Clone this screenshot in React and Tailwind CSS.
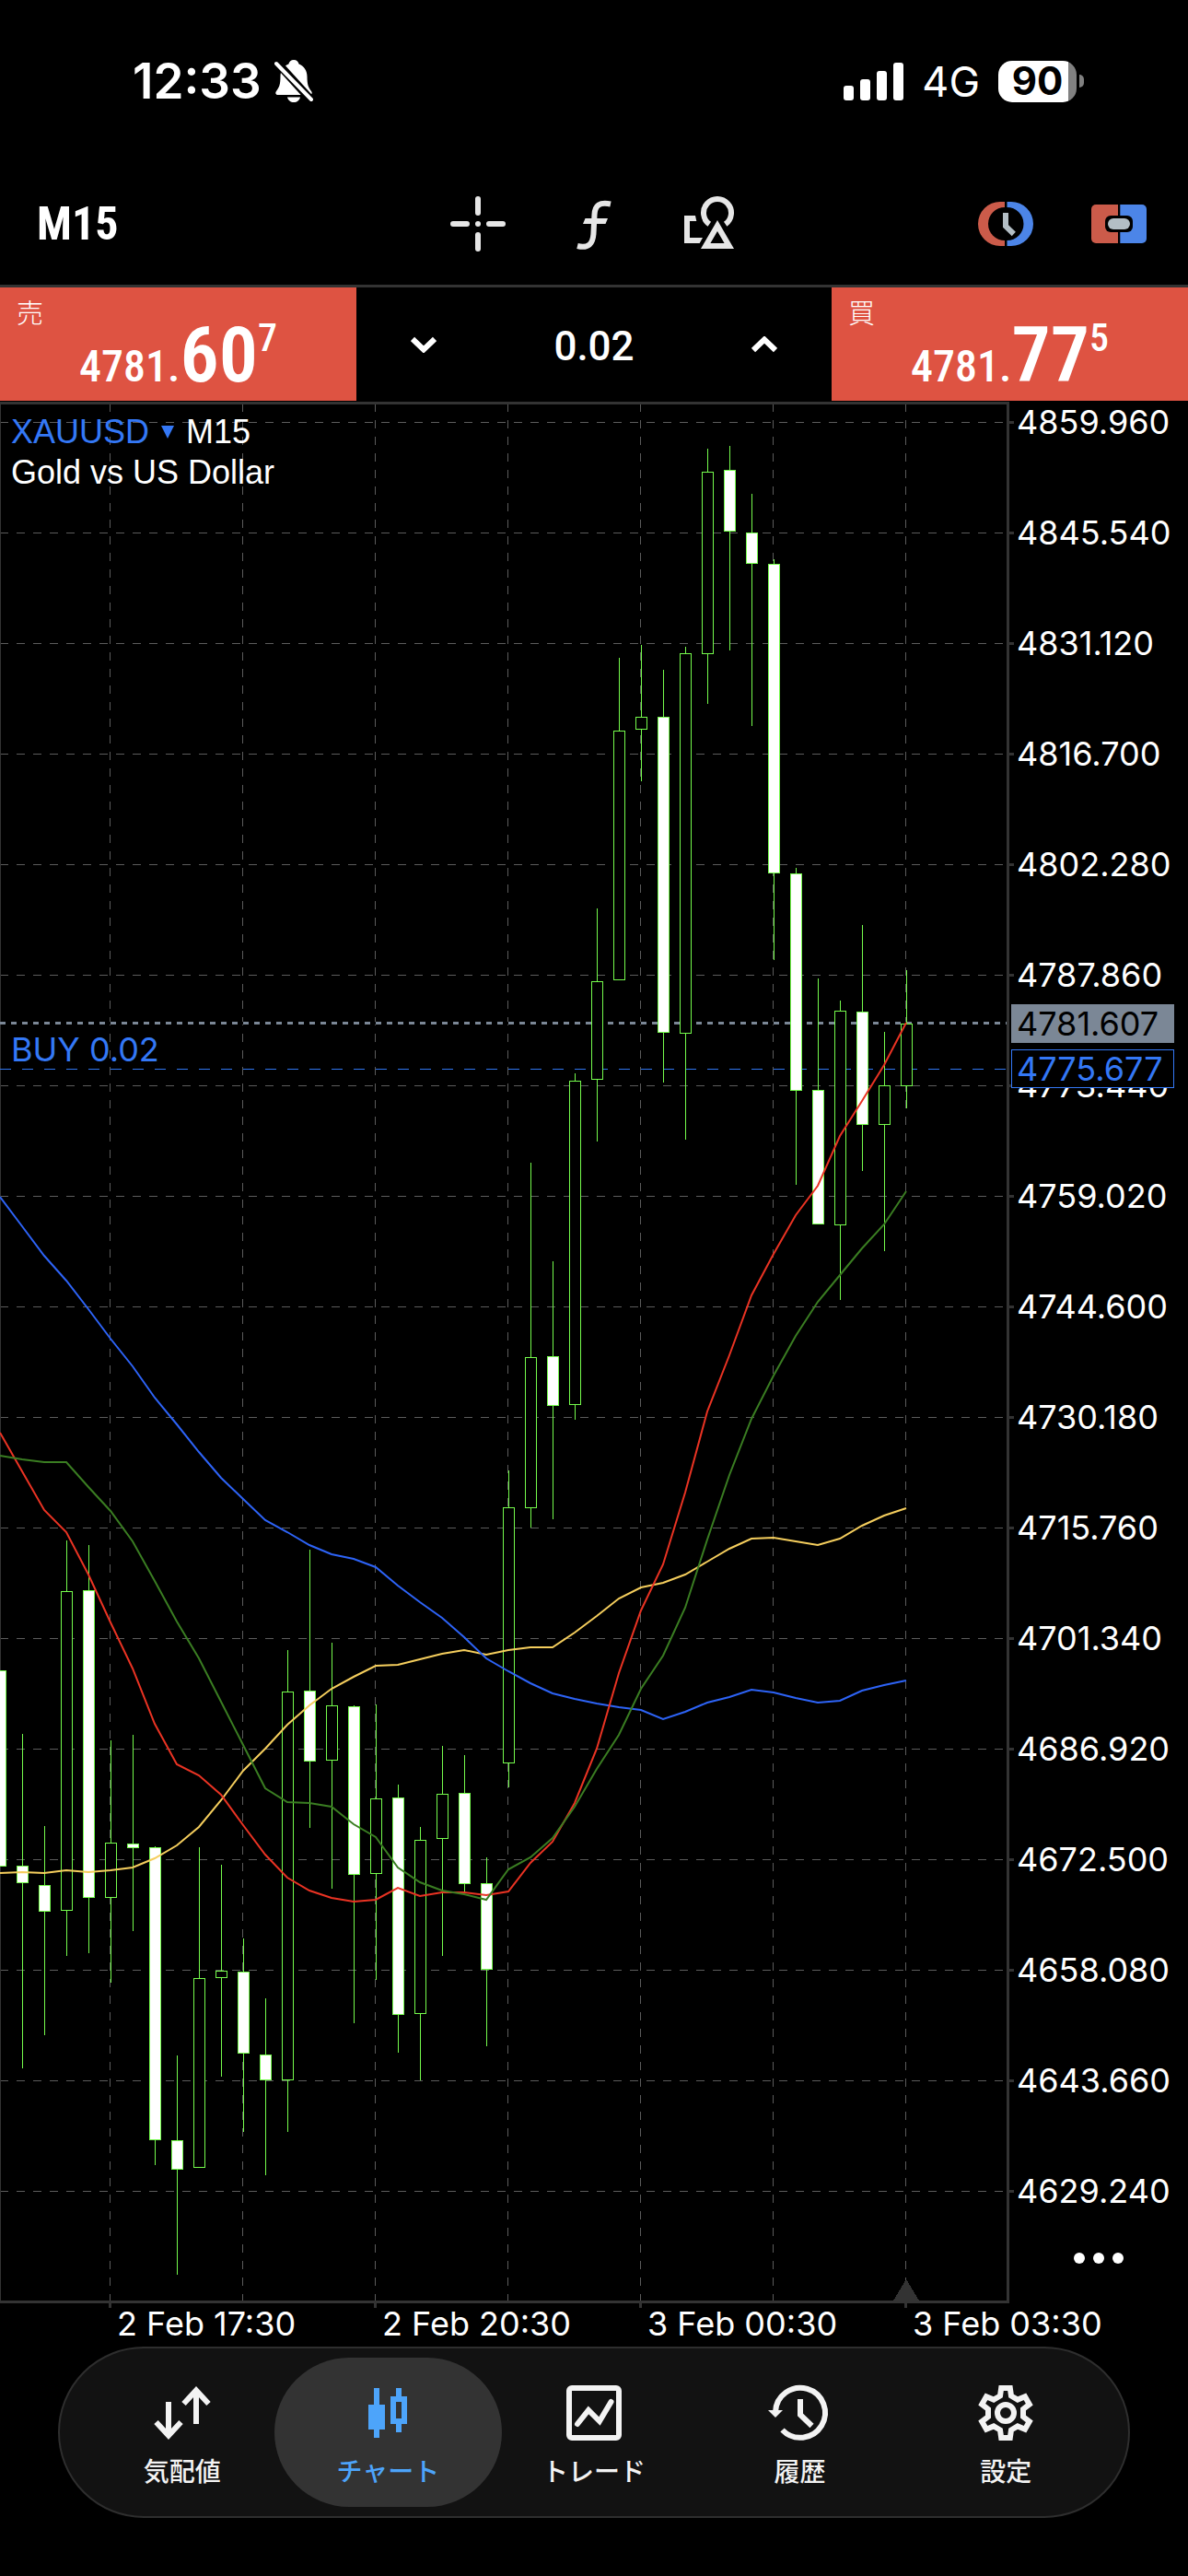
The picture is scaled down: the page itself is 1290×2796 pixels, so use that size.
import React, { useState } from 'react';

// [high, low, bodyTop, bodyBottom, 1 = bearish (filled)]
const candles = [
    [1813, 2026, 1813, 2026, 1],
    [1882, 2245, 2025, 2044, 1],
    [1982, 2209, 2046, 2075, 1],
    [1672, 2123, 1727, 2074, 0],
    [1677, 2120, 1726, 2060, 1],
    [1889, 2152, 2000, 2060, 0],
    [1883, 2096, 2001, 2006, 1],
    [2004, 2350, 2005, 2323, 1],
    [2231, 2469, 2323, 2355, 1],
    [2005, 2352, 2147, 2353, 0],
    [2024, 2254, 2139, 2147, 0],
    [2104, 2314, 2140, 2229, 1],
    [2169, 2361, 2230, 2258, 1],
    [1791, 2314, 1836, 2258, 0],
    [1682, 1984, 1835, 1912, 1],
    [1783, 2050, 1851, 1911, 0],
    [1851, 2196, 1852, 2035, 1],
    [1850, 2149, 1952, 2034, 0],
    [1937, 2228, 1951, 2187, 1],
    [1983, 2258, 1997, 2186, 0],
    [1895, 2123, 1947, 1996, 0],
    [1905, 2054, 1946, 2045, 1],
    [2016, 2221, 2044, 2138, 1],
    [1596, 1940, 1636, 1914, 0],
    [1262, 1658, 1473, 1637, 0],
    [1369, 1649, 1472, 1526, 1],
    [1165, 1541, 1173, 1525, 0],
    [986, 1239, 1065, 1172, 0],
    [714, 1064, 793, 1064, 0],
    [700, 848, 778, 792, 0],
    [727, 1175, 778, 1121, 1],
    [702, 1237, 709, 1122, 0],
    [487, 764, 512, 710, 0],
    [484, 706, 510, 577, 1],
    [536, 788, 578, 612, 1],
    [607, 1042, 612, 948, 1],
    [942, 1286, 948, 1184, 1],
    [1062, 1329, 1183, 1329, 1],
    [1086, 1411, 1097, 1330, 0],
    [1004, 1271, 1098, 1221, 1],
    [1120, 1358, 1178, 1221, 0],
    [1053, 1203, 1111, 1179, 0],
];

// Moving averages, one value per candle
const averages = [
    {
        color: '#f5ce5d',
        values: [2033, 2032, 2033, 2030, 2032, 2030, 2027, 2017, 2003, 1983, 1954, 1922, 1898, 1872, 1851, 1833, 1820, 1808, 1807, 1801, 1795, 1791, 1796, 1791, 1788, 1788, 1772, 1754, 1735, 1723, 1718, 1709, 1695, 1681, 1670, 1669, 1673, 1677, 1670, 1656, 1645, 1637],
    },
    {
        color: '#2d63f6',
        values: [1299, 1331, 1363, 1390, 1421, 1453, 1483, 1517, 1546, 1576, 1604, 1627, 1650, 1663, 1677, 1687, 1692, 1701, 1721, 1739, 1756, 1777, 1800, 1814, 1827, 1838, 1844, 1849, 1853, 1856, 1866, 1858, 1848, 1842, 1834, 1837, 1843, 1848, 1846, 1835, 1829, 1824],
    },
    {
        color: '#ea3323',
        values: [1555, 1597, 1639, 1663, 1709, 1761, 1811, 1871, 1915, 1927, 1948, 1981, 2013, 2038, 2052, 2060, 2064, 2062, 2049, 2058, 2054, 2054, 2057, 2053, 2022, 1999, 1957, 1898, 1816, 1748, 1698, 1620, 1532, 1471, 1406, 1361, 1319, 1287, 1233, 1195, 1156, 1110],
    },
    {
        color: '#3a7d22',
        values: [1580, 1584, 1587, 1587, 1614, 1640, 1673, 1716, 1760, 1800, 1847, 1894, 1941, 1956, 1957, 1961, 1980, 1994, 2027, 2043, 2052, 2056, 2062, 2029, 2016, 1995, 1961, 1920, 1883, 1833, 1797, 1745, 1671, 1601, 1540, 1493, 1450, 1413, 1384, 1355, 1329, 1293],
    },
];

const prices = Array.from({ length: 17 }, (_, i) => ({
    y: 458 + i * 120,
    label: (4859.96 - i * 14.42).toFixed(3),
}));

const columns = [119, 263, 407, 551, 695, 839, 983];

const dates = [
    { x: 119, label: '2 Feb 17:30' },
    { x: 407, label: '2 Feb 20:30' },
    { x: 695, label: '3 Feb 00:30' },
    { x: 983, label: '3 Feb 03:30' },
];

function BellOffIcon() {
    return (
        <svg viewBox="0 0 42 46" className="w-[42px] h-[46px]" aria-hidden="true">
            <path d="M21 0c-3 0-5 2-5.600 4.500C9.500 7 6.500 12 6.500 18c0 9-1.500 12-4.500 16-1.500 2-.5 4 2 4h34c2.500 0 3.500-2 2-4-3-4-4.500-7-4.500-16 0-6-3-11-8.900-13.500C26 2 24 0 21 0z" fill="#fff" />
            <path d="M14 40.500h14c-.8 3.500-3.500 5.500-7 5.500s-6.200-2-7-5.500z" fill="#fff" />
            <path d="M1 1L42 46" stroke="#000" strokeWidth="9" />
            <path d="M2 4L40 43" stroke="#fff" strokeWidth="4" strokeLinecap="round" />
        </svg>
    );
}

function SignalIcon() {
    return (
        <svg viewBox="0 0 65 41" className="w-[65px] h-[41px]" fill="#fff" aria-hidden="true">
            <rect x="0" y="25" width="11" height="16" rx="3" />
            <rect x="18" y="18" width="11" height="23" rx="3" />
            <rect x="36" y="9" width="11" height="32" rx="3" />
            <rect x="54" y="0" width="11" height="41" rx="3" />
        </svg>
    );
}

function StatusBar() {
    return (
        <div className="flex h-44 items-center justify-between pl-[144px] pr-[113px]">
            <div className="flex items-center gap-[14px]">
                <span className="text-[53px] leading-none font-semibold">12:33</span>
                <BellOffIcon />
            </div>
            <div className="flex items-center gap-5">
                <SignalIcon />
                <span className="text-[45px] leading-none">4G</span>
                <div className="flex items-center gap-[3px]">
                    <div className="flex h-[45px] w-[85px] items-center justify-center rounded-[15px] bg-linear-to-r from-white from-90% to-[#808080] to-90%">
                        <span className="text-[42px] leading-none font-bold text-black">90</span>
                    </div>
                    <div className="h-[14px] w-[5px] rounded-r-full bg-[#808080]" />
                </div>
            </div>
        </div>
    );
}

function Toolbar() {
    return (
        <div className="grid h-[133px] grid-cols-3 items-center px-10">
            <button type="button" className="justify-self-start font-['Roboto_Condensed',Roboto,sans-serif] text-[50px] leading-none font-bold">M15</button>

            <div className="flex justify-center gap-[66px]">
                <button type="button" aria-label="Crosshair">
                    <svg viewBox="0 0 60 60" className="size-[60px]" stroke="#e6e6e6" strokeWidth="6" strokeLinecap="round">
                        <path d="M30 3v15M30 42v15M3 30h15M42 30h15M30 30h.01" />
                    </svg>
                </button>
                <button type="button" aria-label="Indicators">
                    <svg viewBox="0 0 60 60" className="size-[60px]">
                        <path d="M48 8.500C36 6 31 10 30.500 20L29.500 40C29 51.500 24 57 12 54" fill="none" stroke="#e6e6e6" strokeWidth="6" />
                        <path d="M20.500 24H45l-2.500 6H18z" fill="#e6e6e6" />
                    </svg>
                </button>
                <button type="button" aria-label="Objects">
                    <svg viewBox="0 0 60 60" className="size-[60px]">
                        <path d="M2 21h12l1.300 6H8v18h14l-3.300 6H2z" fill="#e6e6e6" />
                        <path d="M29.300 30.300A15 15 0 1 1 46.700 30.300" fill="none" stroke="#e6e6e6" strokeWidth="6" />
                        <path d="M38 32L25.200 54h25.600z" fill="none" stroke="#e6e6e6" strokeWidth="6" />
                    </svg>
                </button>
            </div>

            <div className="flex justify-end gap-[63px] pr-[5px]">
                <button type="button" aria-label="Pending order">
                    <svg viewBox="0 0 60 48" className="h-12 w-[60px]">
                        <path d="M29 0H24A24 24 0 0 0 24 48H29V42A18 18 0 0 1 29 6z" fill="#cb5b4a" />
                        <path d="M31.500 0H36A24 24 0 0 1 36 48H31.500V42A18 18 0 0 0 31.500 6z" fill="#4c85e8" />
                        <path d="M30 12v14.500l8.800 8.500" fill="none" stroke="#b3bec5" strokeWidth="6" />
                    </svg>
                </button>
                <button type="button" aria-label="One click trading">
                    <svg viewBox="0 0 60 42" className="h-[42px] w-[60px]">
                        <path d="M5 0H29V42H5A5 5 0 0 1 0 37V5A5 5 0 0 1 5 0z" fill="#cb5b4a" />
                        <path d="M31.300 0H55A5 5 0 0 1 60 5V37A5 5 0 0 1 55 42H31.300z" fill="#4c85e8" />
                        <rect x="15" y="12" width="30" height="18" rx="6" fill="#000" />
                        <rect x="18" y="15" width="24" height="12" rx="6" fill="#b3bec5" />
                    </svg>
                </button>
            </div>
        </div>
    );
}

function PriceButton({ label, whole, pips, point }) {
    return (
        <button type="button" className="flex flex-col bg-[#de5342] text-left">
            <span className="pt-2 pl-[18px] font-['Noto_Sans_CJK_JP',sans-serif] text-[29px] leading-9 font-light">{label}</span>
            <span className="-mt-3 flex items-baseline self-center font-['Roboto_Condensed',Roboto,sans-serif]">
                <span className="text-[48px] leading-none font-medium">{whole}</span>
                <span className="text-[84px] leading-none font-semibold">{pips}</span>
                <span className="self-start pt-[2px] text-[42px] leading-none font-medium">{point}</span>
            </span>
        </button>
    );
}

function TradePanel() {
    const [volume, setVolume] = useState('0.02');

    const step = (delta) => {
        setVolume(Math.max(0.01, Number(volume) + delta).toFixed(2));
    };

    return (
        <div className="grid h-[126px] grid-cols-[3fr_4fr_3fr] border-t-[3px] border-[#333]">
            <PriceButton label="売" whole="4781." pips="60" point="7" />
            <div className="flex items-center justify-between px-12">
                <button type="button" aria-label="Decrease volume" onClick={() => step(-0.01)} className="flex h-20 w-[50px] items-center justify-center">
                    <svg viewBox="0 0 28 18" className="h-[18px] w-7" fill="none" stroke="#fff" strokeWidth="6">
                        <path d="M2 3l12 11.500L26 3" />
                    </svg>
                </button>
                <input
                    type="text"
                    aria-label="Volume"
                    value={volume}
                    onChange={(e) => setVolume(e.target.value)}
                    className="w-40 bg-transparent pt-1 text-center font-[Roboto,sans-serif] text-[44px] leading-none font-medium focus:outline-none"
                />
                <button type="button" aria-label="Increase volume" onClick={() => step(0.01)} className="flex h-20 w-[50px] items-center justify-center">
                    <svg viewBox="0 0 28 18" className="h-[18px] w-7" fill="none" stroke="#fff" strokeWidth="6">
                        <path d="M2 15L14 3.500L26 15" />
                    </svg>
                </button>
            </div>
            <PriceButton label="買" whole="4781." pips="77" point="5" />
        </div>
    );
}

function Chart() {
    return (
        <div className="relative mt-px">
            <svg viewBox="0 436 1290 2111" className="block h-auto w-full font-[Inter,sans-serif] text-[36px]" shapeRendering="crispEdges">
                {/* Grid */}
                <g stroke="#5c5c5c" strokeDasharray="9 9">
                    {prices.map((p) => (
                        <line key={p.y} x1="0" x2="1093" y1={p.y + 0.5} y2={p.y + 0.5} />
                    ))}
                    {columns.map((x) => (
                        <line key={x} x1={x + 0.5} x2={x + 0.5} y1="438" y2="2497" />
                    ))}
                </g>

                {/* Frame and ticks */}
                <g fill="#333">
                    <rect x="0" y="436" width="1096" height="3" />
                    <rect x="0" y="2497" width="1096" height="3" />
                    <rect x="1093" y="436" width="3" height="2064" />
                    <rect x="0" y="436" width="1" height="2064" />
                    {prices.map((p) => (
                        <rect key={p.y} x="1096" y={p.y - 1} width="5" height="3" />
                    ))}
                    {dates.map((d) => (
                        <rect key={d.x} x={d.x - 1} y="2500" width="3" height="5" />
                    ))}
                    <path d="M984 2474l14 23h-28z" />
                </g>

                {/* Bid line and open position */}
                <rect x="0" y="1109" width="1093" height="3" fill="#000" />
                <line x1="0" x2="1093" y1="1110.5" y2="1110.5" stroke="#7b8796" strokeWidth="3" strokeDasharray="6 6" />
                <line x1="0" x2="1093" y1="1160.5" y2="1160.5" stroke="#2f76f0" strokeDasharray="12 12" />

                {/* Candles */}
                {candles.map(([high, low, top, bottom, bearish], i) => (
                    <g key={i} stroke="#75fb4c">
                        <line x1={i * 24 + 0.5} x2={i * 24 + 0.5} y1={high} y2={low} />
                        <rect
                            x={i * 24 - 5.5}
                            y={top + 0.5}
                            width="12"
                            height={bottom - top - 1}
                            fill={bearish ? '#fff' : '#000'}
                        />
                    </g>
                ))}

                {/* Moving averages */}
                {averages.map((ma) => (
                    <polyline
                        key={ma.color}
                        points={ma.values.map((y, i) => `${i * 24},${y}`).join(' ')}
                        fill="none"
                        stroke={ma.color}
                        strokeWidth="2"
                        shapeRendering="auto"
                    />
                ))}

                {/* Axis labels */}
                <g fill="#fff">
                    {prices.map((p) => (
                        <text key={p.y} x="1104" y={p.y + 13}>{p.label}</text>
                    ))}
                    {dates.map((d) => (
                        <text key={d.x} x={d.x + 8} y="2535">{d.label}</text>
                    ))}
                </g>
                <text x="12" y="1152" fill="#3478f6">BUY 0.02</text>
                <rect x="1098" y="1090" width="177" height="42" fill="#7b8796" />
                <text x="1104" y="1124" fill="#000">4781.607</text>
                <rect x="1098.5" y="1139.5" width="176" height="41" fill="#000" stroke="#3478f6" />
                <text x="1104" y="1173" fill="#3478f6">4775.677</text>
            </svg>

            <div className="absolute top-[11px] left-3 font-['Liberation_Sans',sans-serif] text-[36px] leading-[44px]">
                <div className="flex items-center gap-[13px]">
                    <button type="button" className="flex items-center gap-[13px] text-[#3478f6]">
                        XAUUSD
                        <svg viewBox="0 0 14 14" className="size-[14px]" fill="#3478f6" aria-hidden="true">
                            <path d="M0 0h14L7 14z" />
                        </svg>
                    </button>
                    <span>M15</span>
                </div>
                <p>Gold vs US Dollar</p>
            </div>

            <button type="button" aria-label="More" className="absolute right-[70px] bottom-[80px] flex h-8 items-center gap-[9px]">
                <span className="size-3 rounded-full bg-white" />
                <span className="size-3 rounded-full bg-white" />
                <span className="size-3 rounded-full bg-white" />
            </button>
        </div>
    );
}

const tabs = [
    {
        label: '気配値',
        icon: <path d="M15 18v36M1.500 40L15 54.500 28.500 40M45 42V6M31.500 20L45 5.500 58.500 20" fill="none" stroke="currentColor" strokeWidth="6" />,
    },
    {
        label: 'チャート',
        icon: <path d="M15 3h6v18h6v27h-6v9h-6v-9H9V21h6zM39 3h6v9h6v30h-6v9h-6v-9h-6V12h6zM39 18v18h6V18z" fill="currentColor" fillRule="evenodd" />,
    },
    {
        label: 'トレード',
        icon: (
            <g fill="none" stroke="currentColor" strokeWidth="6">
                <rect x="3" y="3" width="54" height="54" rx="3" />
                <path d="M12 42L24 27L36 39L48.500 18" strokeLinecap="round" />
            </g>
        ),
    },
    {
        label: '履歴',
        icon: (
            <g fill="none" stroke="currentColor" strokeWidth="6">
                <path d="M3 29A27 27 0 1 1 10.500 48.500" />
                <path d="M30 15v17l12.500 12" />
                <path d="M-5 27h16l-8 8z" fill="currentColor" stroke="none" />
            </g>
        ),
    },
    {
        label: '設定',
        icon: (
            <g transform="translate(30 30)" fill="none" stroke="currentColor" strokeWidth="6">
                <path d="M-6-18.500L-4.800-27H4.800L6-18.500L13-14.400L21-17.700L25.800-9.300L19-4.100V4.100L25.800 9.300L21 17.700L13 14.400L6 18.500L4.800 27H-4.800L-6 18.500L-13 14.400L-21 17.700L-25.800 9.300L-19 4.100V-4.100L-25.800-9.300L-21-17.700L-13-14.400z" />
                <circle r="9" />
            </g>
        ),
    },
];

function TabBar() {
    const [active, setActive] = useState('チャート');

    return (
        <nav className="mx-[63px] mb-[63px] grid grid-cols-5 rounded-full border-2 border-[#2e2e2e] bg-[#121212] px-[21px] py-[10px]">
            {tabs.map((tab) => (
                <button
                    key={tab.label}
                    type="button"
                    onClick={() => setActive(tab.label)}
                    className={`-mx-3 flex h-[162px] flex-col items-center gap-3 rounded-full pt-[30px] ${
                        active === tab.label ? 'bg-[#333] text-[#4da4fa]' : 'text-[#f3f3f3]'
                    }`}
                >
                    <svg viewBox="0 0 60 60" className="size-[60px] overflow-visible" aria-hidden="true">{tab.icon}</svg>
                    <span className="font-['Noto_Sans_CJK_JP',sans-serif] text-[28px] leading-10 font-medium">{tab.label}</span>
                </button>
            ))}
        </nav>
    );
}

export default function App() {
    return (
        <div className="min-h-screen bg-black font-[Inter,sans-serif] text-white">
            <StatusBar />
            <Toolbar />
            <TradePanel />
            <Chart />
            <TabBar />
        </div>
    );
}
